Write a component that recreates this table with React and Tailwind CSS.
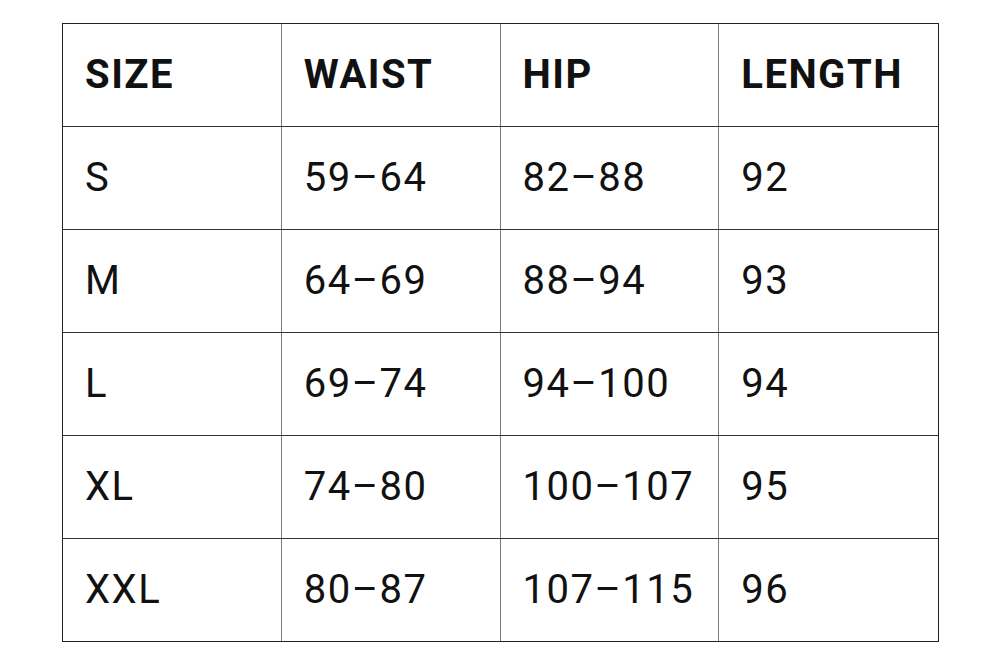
import React from 'react';

const header = ['SIZE', 'WAIST', 'HIP', 'LENGTH'];
const rows = [
    ['S', '59–64', '82–88', '92'],
    ['M', '64–69', '88–94', '93'],
    ['L', '69–74', '94–100', '94'],
    ['XL', '74–80', '100–107', '95'],
    ['XXL', '80–87', '107–115', '96'],
];

const Cell = ({ children, bold, last }) => (
    <div
        className={
            'h-[102px] flex items-center pl-[22px] text-[40px] tracking-[1.5px] text-[#111] ' +
            (bold ? 'font-bold ' : 'font-normal ') +
            (last ? '' : 'border-r border-[#7a7a7a]')
        }
    >
        {children}
    </div>
);

const App = () => {
    return (
        <div className="w-[1000px] h-[658px] bg-white pt-[23px] pl-[62px]" style={{ fontFamily: 'Roboto, sans-serif' }}>
            <div className="w-[877px] border border-[#222]">
                {[header, ...rows].map((row, i) => (
                    <div key={i} className={'grid grid-cols-4 ' + (i > 0 ? 'border-t border-[#333]' : '')}>
                        {row.map((c, j) => (
                            <Cell key={j} bold={i === 0} last={j === 3}>{c}</Cell>
                        ))}
                    </div>
                ))}
            </div>
        </div>
    );
};

export default App;
